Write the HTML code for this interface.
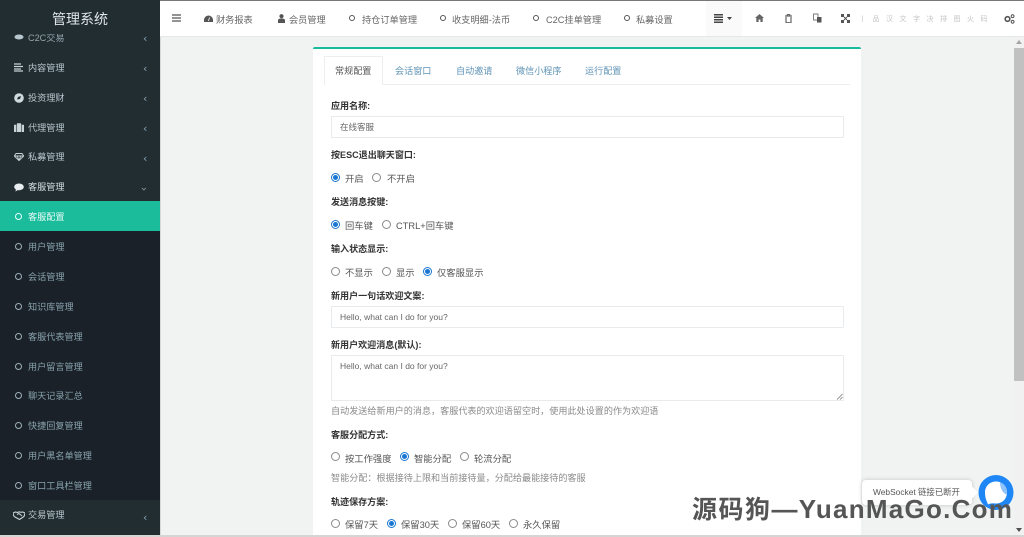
<!DOCTYPE html>
<html lang="zh-CN">
<head>
<meta charset="utf-8">
<title>管理系统</title>
<style>
html,body{margin:0;padding:0;width:1024px;height:537px;overflow:hidden;background:#f1f3f3}
body{position:relative;font-family:"Liberation Sans","Noto Sans CJK SC",sans-serif;font-size:9.5px;color:#555;filter:blur(.35px)}
.a{position:absolute;white-space:nowrap;line-height:14px}
#side{position:absolute;left:0;top:0;width:160px;height:535px;background:#222d32;overflow:hidden}
#sub{position:absolute;left:0;top:201px;width:160px;height:299px;background:#1a2128}
#act{position:absolute;left:0;top:201px;width:160px;height:30px;background:#1abc9c}
.m{position:absolute;left:28px;color:#b8c7ce;font-size:9.15px;line-height:14px;white-space:nowrap;margin-top:1px}
.s{color:#8aa4af}
.ring{position:absolute;width:5px;height:5px;border:1.3px solid #9db0b8;border-radius:50%;margin-top:1px}
.chev{position:absolute;left:143px;color:#8aa4af;font-size:11px;line-height:12px;font-family:"DejaVu Sans",sans-serif;margin-top:1px}
.ic{position:absolute}
#side .ic{margin-top:1px}
#top{position:absolute;left:160px;top:1px;width:864px;height:36px;background:#fff;border-bottom:1px solid #e6e8e8;box-sizing:border-box}
.t{position:absolute;top:12px;font-size:9.2px;line-height:14px;color:#666;white-space:nowrap}
.tr{position:absolute;width:4px;height:4px;border:1.4px solid #555;border-radius:50%;top:14px}
#panel{position:absolute;left:313px;top:47px;width:548px;height:490px;background:#fff;border-top:2.5px solid #18bc9c;box-sizing:border-box;border-radius:2px}
.tab{position:absolute;top:64px;font-size:9.1px;line-height:14px;color:#5f93b5;white-space:nowrap}
.l{position:absolute;left:331px;font-size:9.05px;font-weight:bold;color:#333;line-height:14px;white-space:nowrap}
.r{position:absolute;font-size:9.3px;color:#555;line-height:14px;white-space:nowrap;margin-top:1px}
.ro{position:absolute;width:9px;height:9px;border:1px solid #8a8a8a;border-radius:50%;box-sizing:border-box;background:#fff}
.ron{position:absolute;width:9px;height:9px;border:1px solid #1976d2;border-radius:50%;box-sizing:border-box;background:#fff}
.ron:after{content:"";position:absolute;left:1px;top:1px;width:5px;height:5px;background:#1976d2;border-radius:50%}
.inp{position:absolute;left:331px;width:513px;background:#fff;border:1px solid #e8ebed;box-sizing:border-box;color:#666;font-size:8.5px;padding-left:8px;border-radius:1px}
.h{position:absolute;left:331px;font-size:9.1px;color:#8a8a8a;line-height:14px;white-space:nowrap}
</style>
</head>
<body>
<div style="position:absolute;left:0;top:0;width:1024px;height:1px;background:#77777c"></div>

<div id="side">
  <div id="sub"></div>
  <div id="act"></div>
  <div class="m" style="top:30px;color:#93a5ad">C2C交易</div>
  <svg class="ic" style="left:14px;top:32px" width="10" height="9"><ellipse cx="5" cy="4" rx="4.5" ry="2.5" fill="#b8c7ce"/></svg>
  <div class="chev" style="top:32px">‹</div>
  <div style="position:absolute;left:0;top:0;width:160px;height:34px;background:#222d32;z-index:3"></div>
  <div class="a" style="left:52px;top:10px;font-size:14px;line-height:18px;color:#dfe5e8;z-index:4">管理系统</div>

  <svg class="ic" style="left:14px;top:62px" width="10" height="9"><path d="M0 1h7M0 3.500h9M0 6h7M0 8h9" stroke="#c7d3d8" stroke-width="1.3"/></svg>
  <div class="m" style="top:60px">内容管理</div><div class="chev" style="top:62px">‹</div>

  <svg class="ic" style="left:14px;top:92px" width="10" height="10"><circle cx="5" cy="5" r="4.8" fill="#d0dade"/><path d="M3 6.500L4 4l3-1-1 3z" fill="#222d32"/></svg>
  <div class="m" style="top:90px">投资理财</div><div class="chev" style="top:92px">‹</div>

  <svg class="ic" style="left:14px;top:122px" width="10" height="9"><path d="M0 2h10v7H0zM3.300 2V.5h3.400V2" fill="#c7d3d8" stroke="#c7d3d8" stroke-width=".6"/><path d="M2.500 2v7M7.500 2v7" stroke="#222d32" stroke-width=".6"/></svg>
  <div class="m" style="top:120px">代理管理</div><div class="chev" style="top:122px">‹</div>

  <svg class="ic" style="left:14px;top:152px" width="10" height="8"><path d="M2 .5h6L9.700 3 5 7.600.3 3zM.3 3h9.400M3.300 3L5 7.500 6.700 3" fill="none" stroke="#c7d3d8" stroke-width=".9"/></svg>
  <div class="m" style="top:149px">私募管理</div><div class="chev" style="top:152px">‹</div>

  <svg class="ic" style="left:14px;top:182px" width="10" height="9"><path d="M5 .5C7.700.5 9.800 2 9.800 3.900S7.700 7.200 5 7.200c-.5 0-.9 0-1.300-.1L1.400 8.500l.5-2.100C.8 5.800.2 4.900.2 3.900.2 2 2.300.5 5 .5z" fill="#e8eef0"/></svg>
  <div class="m" style="top:179px;color:#d5dfe3">客服管理</div>
  <div class="chev" style="top:182px;left:142px;transform:rotate(-90deg)">‹</div>

  <div class="ring" style="left:15px;top:212px;border-color:#e6fff8"></div>
  <div class="m" style="top:209px;color:#e8fbf6">客服配置</div>

  <div class="ring" style="left:15px;top:242px"></div><div class="m s" style="top:239px">用户管理</div>
  <div class="ring" style="left:15px;top:272px"></div><div class="m s" style="top:269px">会话管理</div>
  <div class="ring" style="left:15px;top:302px"></div><div class="m s" style="top:299px">知识库管理</div>
  <div class="ring" style="left:15px;top:332px"></div><div class="m s" style="top:329px">客服代表管理</div>
  <div class="ring" style="left:15px;top:362px"></div><div class="m s" style="top:359px">用户留言管理</div>
  <div class="ring" style="left:15px;top:391px"></div><div class="m s" style="top:388px">聊天记录汇总</div>
  <div class="ring" style="left:15px;top:421px"></div><div class="m s" style="top:418px">快捷回复管理</div>
  <div class="ring" style="left:15px;top:451px"></div><div class="m s" style="top:448px">用户黑名单管理</div>
  <div class="ring" style="left:15px;top:481px"></div><div class="m s" style="top:478px">窗口工具栏管理</div>

  <svg class="ic" style="left:13px;top:510px" width="12" height="9"><path d="M0 2l2.500-1 2 .5L6 .8l2 .5 1.500-.3L12 2l-1 3.500L6.500 8.500 2 6 .8 5z" fill="none" stroke="#c7d3d8" stroke-width="1.1"/><path d="M4 3.500l2-1 3 2.500" stroke="#c7d3d8" fill="none"/></svg>
  <div class="m" style="top:507px">交易管理</div><div class="chev" style="top:511px">‹</div>
</div>
<div style="position:absolute;left:160px;top:37px;width:1px;height:498px;background:#d5d9db"></div>

<div id="top">
  <svg class="ic" style="left:12px;top:13px" width="9" height="8"><path d="M0 1h9M0 4h9M0 7h9" stroke="#555" stroke-width="1.2"/></svg>

  <svg class="ic" style="left:44px;top:14px" width="9" height="7"><path d="M0 7V5a4.500 4.500 0 0 1 9 0v2z" fill="#555"/><path d="M4.500 6L5.500 2.500" stroke="#fff" stroke-width=".8"/></svg>
  <div class="t" style="left:56px">财务报表</div>

  <svg class="ic" style="left:118px;top:13px" width="7" height="9"><circle cx="3.500" cy="2.200" r="2.100" fill="#555"/><path d="M0 9V6.500C0 5 1.200 4.500 3.500 4.500S7 5 7 6.500V9z" fill="#555"/></svg>
  <div class="t" style="left:129px">会员管理</div>

  <div class="tr" style="left:189px"></div><div class="t" style="left:202px">持仓订单管理</div>
  <div class="tr" style="left:280px"></div><div class="t" style="left:292px">收支明细-法币</div>
  <div class="tr" style="left:373px"></div><div class="t" style="left:386px">C2C挂单管理</div>
  <div class="tr" style="left:464px"></div><div class="t" style="left:476px">私募设置</div>

  <div style="position:absolute;left:546px;top:0;width:36px;height:35px;background:#fafafa"></div>
  <svg class="ic" style="left:554px;top:13px" width="18" height="9"><path d="M0 .8h9M0 3.300h9M0 5.800h9M0 8.200h9" stroke="#444" stroke-width="1.500"/><path d="M13 3h5l-2.500 3z" fill="#444"/></svg>

  <svg class="ic" style="left:595px;top:13px" width="9" height="8"><path d="M4.500 0L9 4H7.700v4H5.400V5.500H3.600V8H1.300V4H0z" fill="#666"/></svg>
  <svg class="ic" style="left:625px;top:13px" width="7" height="9"><path d="M0 2h7M2.300 2V.5h2.400V2M1 3v5.700h5V3" fill="none" stroke="#666" stroke-width="1.200"/></svg>
  <svg class="ic" style="left:653px;top:12px" width="9" height="10"><path d="M.5 1h4.500v6H.5z" fill="none" stroke="#777" stroke-width=".9"/><path d="M4 4h4.500v5.500H4z" fill="#555"/></svg>
  <svg class="ic" style="left:681px;top:13px" width="9" height="9"><path d="M0 0h3v3H0zM6 0h3v3H6zM0 6h3v3H0zM6 6h3v3H6z" fill="#555"/><path d="M3 3l3 3M6 3L3 6" stroke="#555"/></svg>

  <div class="t" style="left:699px;color:#c4c4c4;font-size:7px;letter-spacing:6.500px">丨品汉文字决排图火码</div>

  <svg class="ic" style="left:844px;top:13px" width="11" height="10"><circle cx="3.500" cy="5" r="2.300" fill="none" stroke="#555" stroke-width="1.600"/><circle cx="8.600" cy="2.200" r="1.400" fill="none" stroke="#555"/><circle cx="8.600" cy="7.800" r="1.400" fill="none" stroke="#555"/></svg>
</div>

<div id="panel"></div>

<!-- Tabs -->
<div style="position:absolute;left:324px;top:84px;width:526px;height:1px;background:#eceeef"></div>
<div style="position:absolute;left:324px;top:56px;width:59px;height:29px;background:#fff;border:1px solid #eceeef;border-bottom:none;box-sizing:border-box"></div>
<div class="tab" style="left:335px;color:#555">常规配置</div>
<div class="tab" style="left:395px">会话窗口</div>
<div class="tab" style="left:456px">自动邀请</div>
<div class="tab" style="left:516px">微信小程序</div>
<div class="tab" style="left:585px">运行配置</div>

<!-- Form -->
<div class="l" style="top:99px">应用名称:</div>
<div class="inp" style="top:116px;height:22px;line-height:21px">在线客服</div>

<div class="l" style="top:148px">按ESC退出聊天窗口:</div>
<div class="ron" style="left:331px;top:173px"></div><div class="r" style="left:345px;top:171px">开启</div>
<div class="ro" style="left:372px;top:173px"></div><div class="r" style="left:387px;top:171px">不开启</div>

<div class="l" style="top:195px">发送消息按键:</div>
<div class="ron" style="left:331px;top:220px"></div><div class="r" style="left:345px;top:218px">回车键</div>
<div class="ro" style="left:382px;top:220px"></div><div class="r" style="left:396px;top:218px">CTRL+回车键</div>

<div class="l" style="top:242px">输入状态显示:</div>
<div class="ro" style="left:331px;top:267px"></div><div class="r" style="left:345px;top:265px">不显示</div>
<div class="ro" style="left:382px;top:267px"></div><div class="r" style="left:396px;top:265px">显示</div>
<div class="ron" style="left:423px;top:267px"></div><div class="r" style="left:437px;top:265px">仅客服显示</div>

<div class="l" style="top:289px">新用户一句话欢迎文案:</div>
<div class="inp" style="top:306px;height:22px;line-height:21px">Hello, what can I do for you?</div>

<div class="l" style="top:338px">新用户欢迎消息(默认):</div>
<div class="inp" style="top:355px;height:46px;line-height:20px">Hello, what can I do for you?</div>
<svg class="ic" style="left:836px;top:393px" width="7" height="7"><path d="M1 6.500L6.500 1M4 6.500L6.500 4" stroke="#777" stroke-width=".8"/></svg>
<div class="h" style="top:404px">自动发送给新用户的消息，客服代表的欢迎语留空时，使用此处设置的作为欢迎语</div>

<div class="l" style="top:428px">客服分配方式:</div>
<div class="ro" style="left:331px;top:452px"></div><div class="r" style="left:345px;top:451px">按工作强度</div>
<div class="ron" style="left:400px;top:452px"></div><div class="r" style="left:414px;top:451px">智能分配</div>
<div class="ro" style="left:460px;top:452px"></div><div class="r" style="left:474px;top:451px">轮流分配</div>
<div class="h" style="top:471px">智能分配：根据接待上限和当前接待量，分配给最能接待的客服</div>

<div class="l" style="top:495px">轨迹保存方案:</div>
<div class="ro" style="left:331px;top:519px"></div><div class="r" style="left:345px;top:517px">保留7天</div>
<div class="ron" style="left:387px;top:519px"></div><div class="r" style="left:401px;top:517px">保留30天</div>
<div class="ro" style="left:448px;top:519px"></div><div class="r" style="left:462px;top:517px">保留60天</div>
<div class="ro" style="left:509px;top:519px"></div><div class="r" style="left:523px;top:517px">永久保留</div>

<!-- Scrollbar -->
<div style="position:absolute;left:1014px;top:37px;width:10px;height:498px;background:#f1f1f1"></div>
<div style="position:absolute;left:1014px;top:48px;width:10px;height:333px;background:#c1c1c1"></div>
<svg class="ic" style="left:1015px;top:40px" width="8" height="5"><path d="M4 0l3 4H1z" fill="#a5a5a5"/></svg>
<svg class="ic" style="left:1015px;top:528px" width="8" height="5"><path d="M4 4L1 0h6z" fill="#505050"/></svg>

<!-- WebSocket popover and chat bubble -->
<div style="position:absolute;left:862px;top:480px;width:110px;height:25px;background:#fff;border-radius:4px;box-shadow:0 0 4px rgba(0,0,0,.2)"></div>
<div style="position:absolute;left:967px;top:488px;width:9px;height:9px;background:#fff;transform:rotate(45deg)"></div>
<div class="a" style="left:873px;top:485px;font-size:8.4px;color:#555">WebSocket 链接已断开</div>
<svg class="ic" style="left:978px;top:475px" width="36" height="36">
  <circle cx="18" cy="17.500" r="17.500" fill="#1f87f5"/>
  <path d="M18 6.500C24.500 6.500 29 11.500 29 17.500S24.500 28.500 18 28.500C15.500 28.500 12.500 28 10 29.500C9.500 27.500 7 24 7 17.500C7 11.500 11.500 6.500 18 6.500Z" fill="#fff"/>
  <path d="M22 7.200C26.500 8.800 29 13 29 17.500C29 18.300 29 19 28.800 19.700C25 18.500 22 13.500 22 7.200Z" fill="#8fc3fb"/>
</svg>

<!-- Watermark -->
<div class="a" style="left:692px;top:494px;font-size:26px;line-height:30px;font-weight:bold;color:#555;font-family:'Liberation Sans','Noto Sans CJK SC',sans-serif;letter-spacing:1.250px"><span style="font-size:25px;letter-spacing:1.500px">源码狗</span>—YuanMaGo.Com</div>

<div style="position:absolute;left:0;top:535px;width:1024px;height:2px;background:#d5d5d3"></div>
</body>
</html>
